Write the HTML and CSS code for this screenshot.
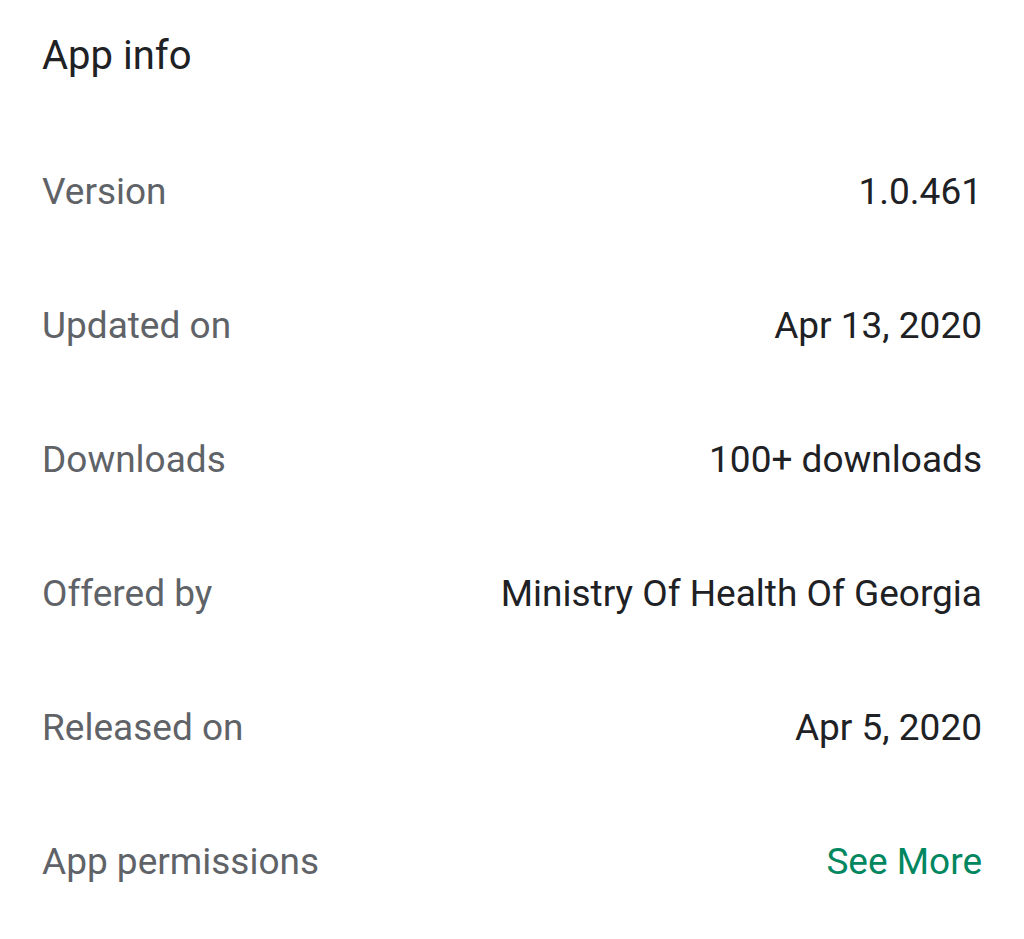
FILE: index.html
```html
<!DOCTYPE html>
<html>
<head>
<meta charset="utf-8">
<link rel="stylesheet" href="styles.css">
</head>
<body>
<div class="page">
  <h1 class="title">App info</h1>
  <div class="rows">
    <div class="row"><span class="label">Version</span><span class="value">1.0.461</span></div>
    <div class="row"><span class="label">Updated on</span><span class="value">Apr 13, 2020</span></div>
    <div class="row"><span class="label">Downloads</span><span class="value">100+ downloads</span></div>
    <div class="row"><span class="label">Offered by</span><span class="value">Ministry Of Health Of Georgia</span></div>
    <div class="row"><span class="label">Released on</span><span class="value">Apr 5, 2020</span></div>
    <div class="row"><span class="label">App permissions</span><span class="value link">See More</span></div>
  </div>
</div>
</body>
</html>
```
FILE: styles.css
```css
html, body {
  margin: 0;
  padding: 0;
  background: #ffffff;
}
.page {
  font-family: Roboto, "Noto Sans", sans-serif;
  padding: 32px 42px 0 42px;
}
.title {
  margin: 0 0 45px 0;
  font-size: 40px;
  line-height: 48px;
  font-weight: 400;
  color: #202124;
}
.rows {
  display: flex;
  flex-direction: column;
}
.row {
  display: flex;
  justify-content: space-between;
  align-items: center;
  height: 134px;
  line-height: 134px;
  font-size: 37px;
}
.label {
  color: #5f6368;
}
.value {
  color: #202124;
}
.link {
  color: #01875f;
}
```
